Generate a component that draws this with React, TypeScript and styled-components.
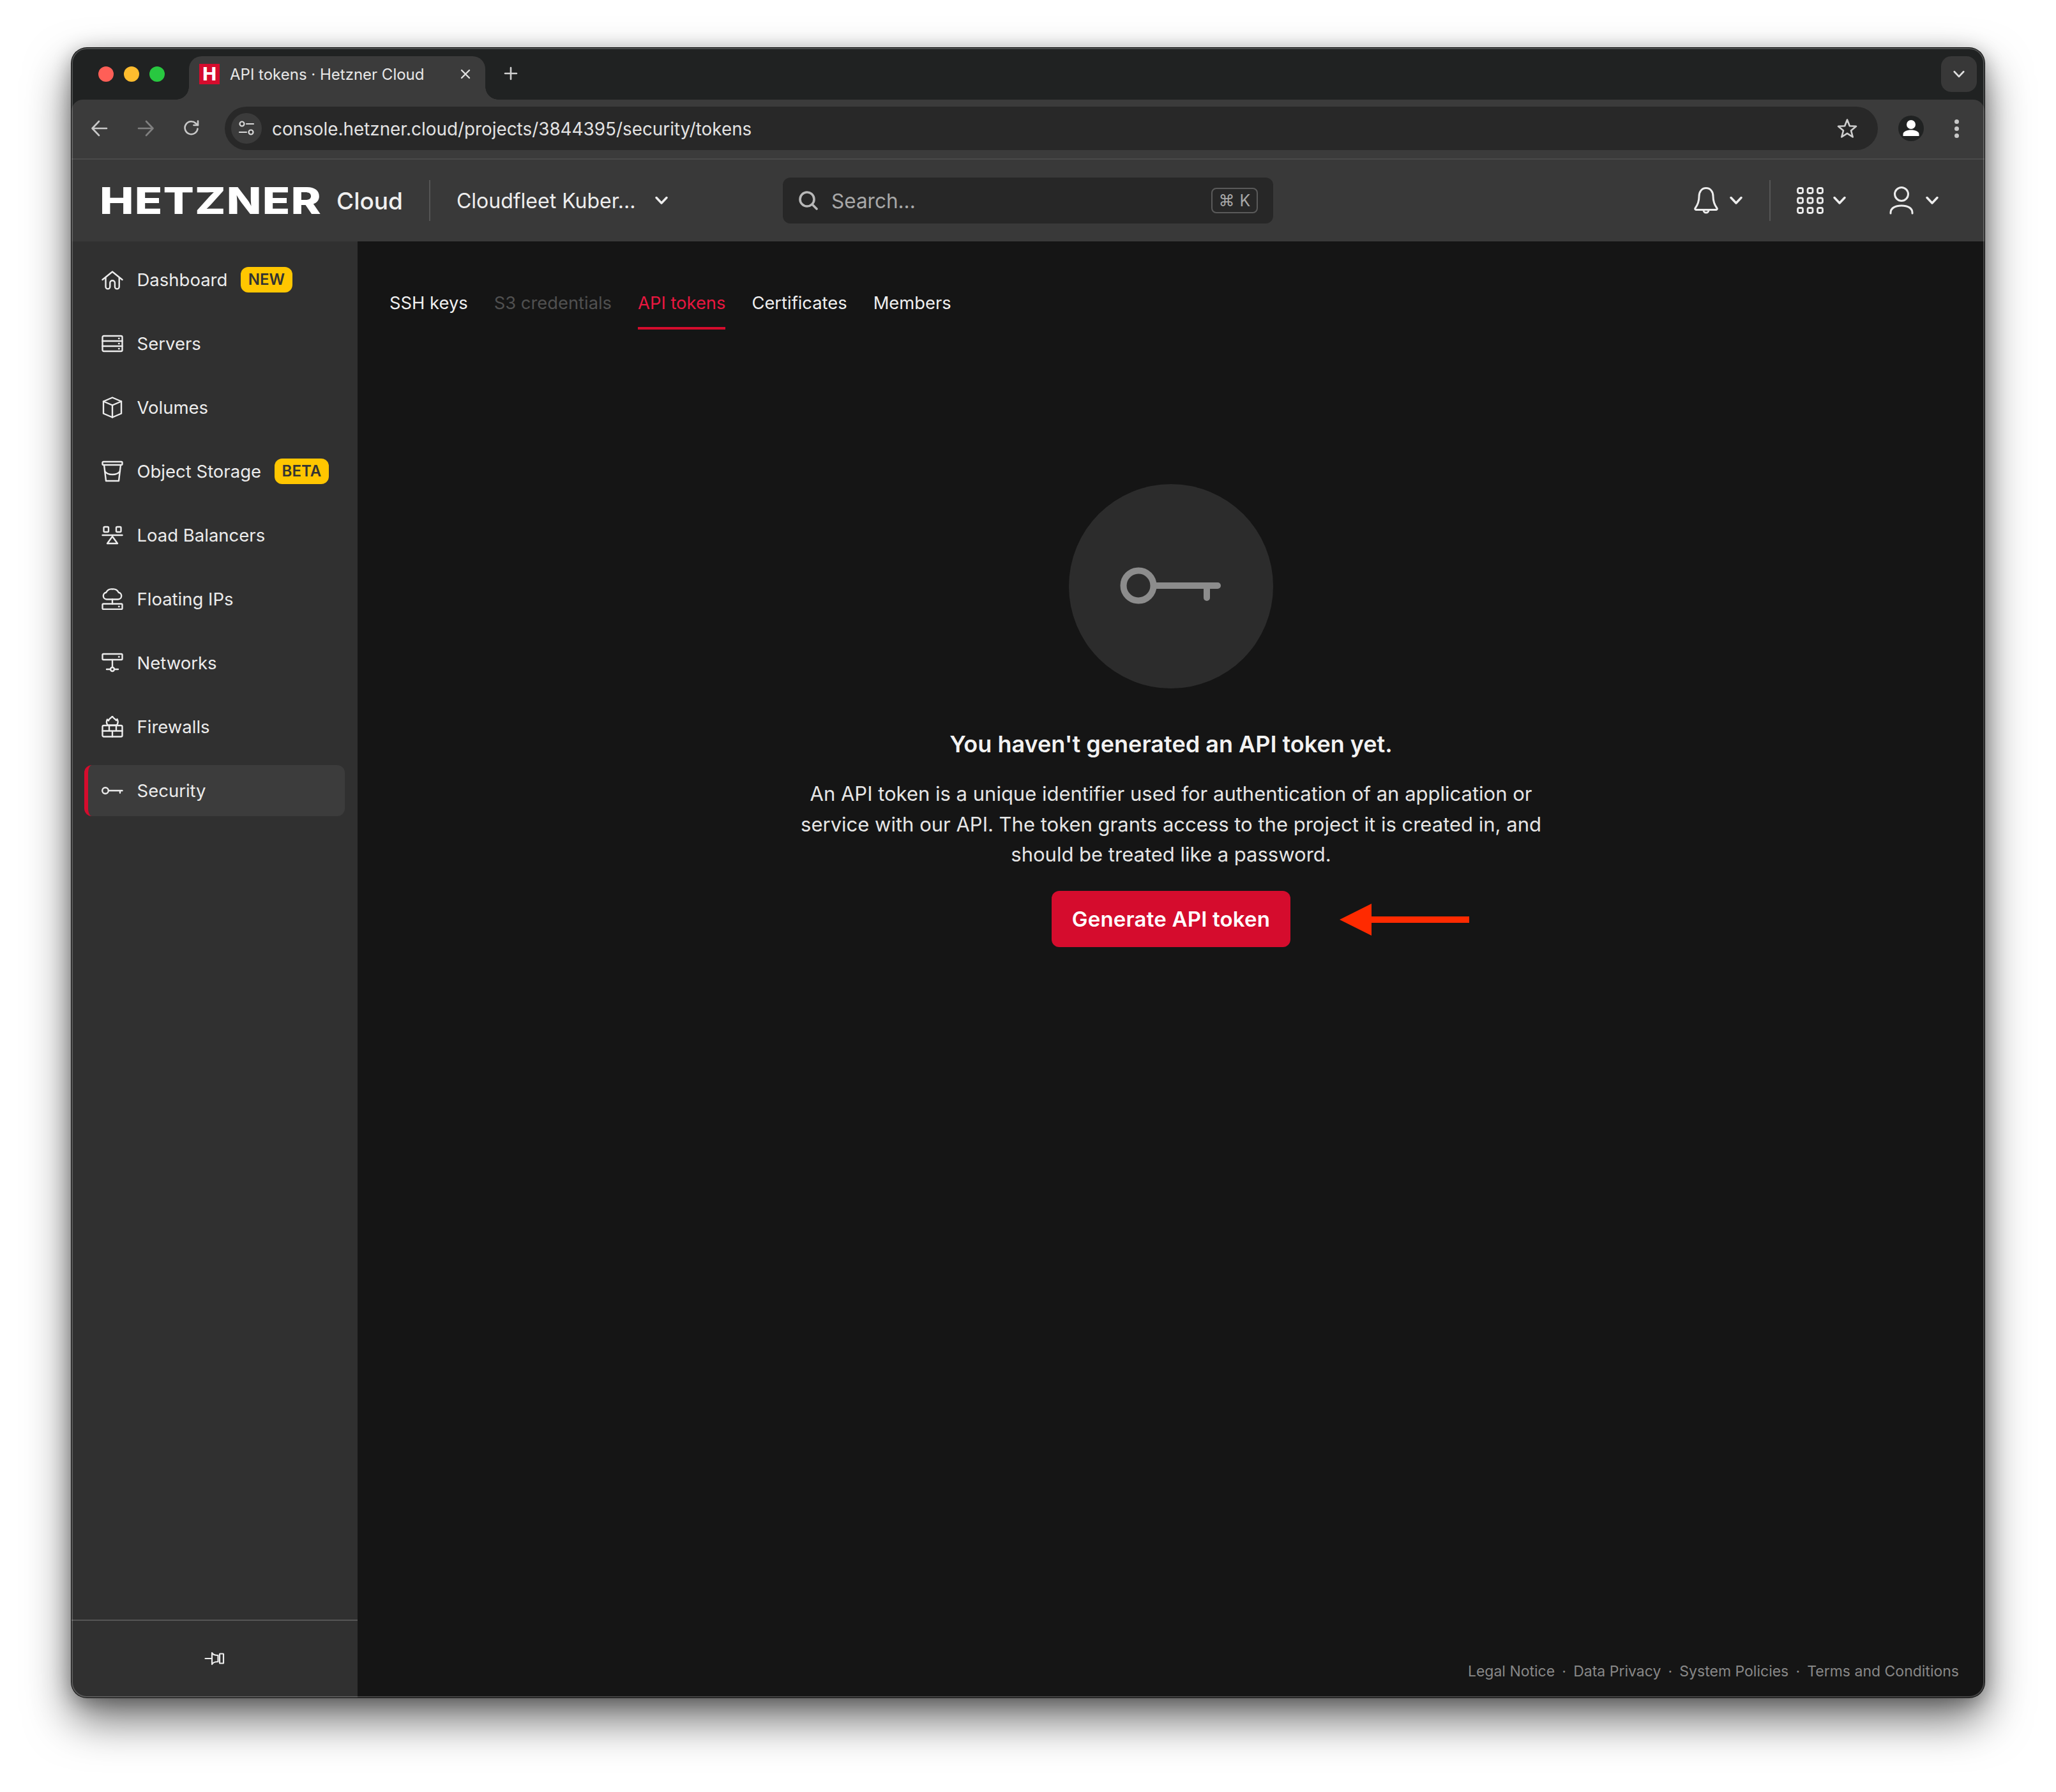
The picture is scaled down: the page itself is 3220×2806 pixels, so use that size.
import React from "react";
import styled, { createGlobalStyle } from "styled-components";

const Global = createGlobalStyle`
  html, body { margin: 0; padding: 0; background: #fff; }
  body { font-family: Inter, "Liberation Sans", sans-serif; }
  * { box-sizing: border-box; }
`;

const Page = styled.div`
  width: 3220px;
  height: 2806px;
  padding: 75px 112px 148px 112px;
  background: #fff;
  overflow: hidden;
`;

const Window = styled.div`
  position: relative;
  width: 2996px;
  height: 2583px;
  border-radius: 24px;
  background: #202222;
  display: flex;
  flex-direction: column;
  box-shadow: 0 0 0 1px #0c0c0c, 0 34px 70px rgba(0, 0, 0, 0.58), 0 6px 30px rgba(0, 0, 0, 0.3);
  &::after {
    content: "";
    position: absolute;
    inset: 0;
    border-radius: 24px;
    border: 2px solid rgba(255, 255, 255, 0.2);
    pointer-events: none;
  }
`;

const TabStrip = styled.div`
  height: 81px;
  flex: none;
  display: flex;
  align-items: flex-start;
  padding: 13px 12px 0 42px;
`;

const Lights = styled.div`
  display: flex;
  gap: 16px;
  padding-top: 16px;
  width: 142px;
`;

const Light = styled.span<{ $c: string }>`
  width: 24px;
  height: 24px;
  border-radius: 50%;
  background: ${(p) => p.$c};
`;

const Tab = styled.div`
  position: relative;
  width: 464px;
  height: 68px;
  background: #3b3b3b;
  border-radius: 20px 20px 0 0;
  display: flex;
  align-items: center;
  padding: 0 22px 12px 16px;
  color: #e8e8e8;
  font-size: 24px;
  &::before,
  &::after {
    content: "";
    position: absolute;
    bottom: 0;
    width: 20px;
    height: 20px;
  }
  &::before {
    left: -20px;
    background: radial-gradient(circle at 0 0, transparent 19.5px, #3b3b3b 20px);
  }
  &::after {
    right: -20px;
    background: radial-gradient(circle at 100% 0, transparent 19.5px, #3b3b3b 20px);
  }
`;

const Favicon = styled.span`
  width: 32px;
  height: 32px;
  flex: none;
  background: #d50c2d;
  color: #fff;
  font-size: 29px;
  font-weight: 800;
  line-height: 32px;
  text-align: center;
`;

const TabTitle = styled.span`
  margin-left: 16px;
  flex: 1;
  white-space: nowrap;
`;

const NewTab = styled.span`
  margin-left: 28px;
  margin-top: 15px;
  display: flex;
`;

const StripMenu = styled.div`
  margin-left: auto;
  width: 56px;
  height: 56px;
  border-radius: 16px;
  background: #383838;
  display: flex;
  align-items: center;
  justify-content: center;
`;

const Toolbar = styled.div`
  height: 94px;
  flex: none;
  background: #3b3b3b;
  border-radius: 18px 18px 0 0;
  border-bottom: 2px solid #4a4a4a;
  display: flex;
  align-items: center;
  padding: 0 40px 2px 30px;
`;

const NavButton = styled.span`
  width: 28px;
  height: 28px;
  margin-right: 44px;
  display: flex;
`;

const Omnibox = styled.div`
  margin-left: -6px;
  flex: 1;
  height: 68px;
  border-radius: 34px;
  background: #282828;
  display: flex;
  align-items: center;
  padding: 0 32px 0 10px;
`;

const TuneChip = styled.span`
  width: 48px;
  height: 48px;
  border-radius: 50%;
  background: #3b3b3b;
  display: flex;
  align-items: center;
  justify-content: center;
`;

const Url = styled.span`
  margin-left: 16px;
  padding-top: 2px;
  flex: 1;
  color: #e3e3e3;
  font-size: 27.85px;
  white-space: nowrap;
`;

const Avatar = styled.span`
  margin-left: 32px;
  width: 40px;
  height: 40px;
  border-radius: 50%;
  background: #202222;
  display: flex;
  align-items: center;
  justify-content: center;
`;

const DotsMenu = styled.span`
  margin-left: 48px;
  display: flex;
  flex-direction: column;
  gap: 4px;
`;

const Dot = styled.span`
  width: 7px;
  height: 7px;
  border-radius: 50%;
  background: #c8c8c8;
`;

const Header = styled.header`
  height: 128px;
  flex: none;
  background: #393939;
  display: grid;
  grid-template-columns: 1114px 768px 1fr;
  align-items: center;
`;

const Brand = styled.div`
  display: flex;
  align-items: center;
  padding-left: 48px;
  color: #fff;
`;

const LogoBox = styled.span`
  width: 343px;
  height: 44px;
  display: block;
  overflow: visible;
`;

const LogoText = styled.span`
  display: inline-block;
  margin-left: -4px;
  font-family: Inter, sans-serif;
  font-weight: 800;
  font-size: 58px;
  line-height: 44px;
  white-space: nowrap;
  transform-origin: 0 50%;
  transform: scaleX(1.232);
  letter-spacing: 1px;
`;

const CloudText = styled.span`
  margin-left: 24px;
  font-size: 37px;
  font-weight: 500;
  color: #f0f0f0;
`;

const VRule = styled.span<{ $h: number }>`
  width: 2px;
  height: ${(p) => p.$h}px;
  background: #555;
  flex: none;
`;

const BrandRule = styled(VRule)`
  margin-left: 41px;
`;

const ProjectName = styled.span`
  margin-left: 41px;
  font-size: 32px;
  color: #eee;
  white-space: nowrap;
`;

const ProjectCaret = styled.span`
  margin-left: 31px;
  display: flex;
`;

const Search = styled.div`
  height: 72px;
  border-radius: 12px;
  background: #272727;
  display: flex;
  align-items: center;
  padding: 0 24px;
  color: #a8a8a8;
`;

const SearchLabel = styled.span`
  margin-left: 20px;
  flex: 1;
  font-size: 31.5px;
`;

const Kbd = styled.span`
  width: 73px;
  height: 40px;
  border: 2px solid #5a5a5a;
  border-radius: 8px;
  display: flex;
  align-items: center;
  justify-content: center;
  gap: 8px;
  font-size: 25px;
  font-family: "DejaVu Sans", Inter, sans-serif;
`;

const KbdKey = styled.span`
  font-family: Inter, sans-serif;
`;

const HeaderActions = styled.div`
  display: flex;
  align-items: center;
  justify-content: flex-end;
  padding-right: 72px;
`;

const Action = styled.span<{ $gap: number; $ml: number }>`
  display: flex;
  align-items: center;
  gap: ${(p) => p.$gap}px;
  margin-left: ${(p) => p.$ml}px;
`;

const Body = styled.div`
  flex: 1;
  min-height: 0;
  display: flex;
  border-radius: 0 0 24px 24px;
  overflow: hidden;
`;

const Sidebar = styled.aside`
  width: 448px;
  flex: none;
  background: #303030;
  display: flex;
  flex-direction: column;
`;

const Nav = styled.nav`
  flex: 1;
  display: flex;
  flex-direction: column;
  gap: 20px;
  padding: 20px 20px 0;
`;

const NavRow = styled.div<{ $active?: boolean }>`
  height: 80px;
  display: flex;
  align-items: center;
  gap: 21.5px;
  padding-left: 21px;
  border-left: 6px solid ${(p) => (p.$active ? "#d50c2d" : "transparent")};
  border-radius: 12px;
  background: ${(p) => (p.$active ? "#3c3c3c" : "transparent")};
  color: #ececec;
  font-size: 27.5px;
  white-space: nowrap;
`;

const NavBadge = styled.span`
  margin-left: -1px;
  height: 40px;
  padding: 0 12px;
  border-radius: 12px;
  background: #ffc600;
  color: #333;
  font-size: 24px;
  font-weight: 600;
  line-height: 40px;
`;

const SidebarFoot = styled.div`
  height: 122px;
  flex: none;
  border-top: 2px solid #555;
  padding-bottom: 2px;
  display: flex;
  align-items: center;
  justify-content: center;
`;

const Main = styled.main`
  flex: 1;
  background: #151515;
  display: flex;
  flex-direction: column;
  padding-top: 80px;
`;

const Tabs = styled.div`
  display: flex;
  gap: 41px;
  padding-left: 50px;
`;

const PageTab = styled.div<{ $state?: "active" | "disabled" }>`
  height: 58px;
  font-size: 27.35px;
  line-height: 34px;
  white-space: nowrap;
  color: ${(p) => (p.$state === "active" ? "#e8173f" : p.$state === "disabled" ? "#505050" : "#f0f0f0")};
  border-bottom: 4px solid ${(p) => (p.$state === "active" ? "#d50c2d" : "transparent")};
`;

const Empty = styled.section`
  display: flex;
  flex-direction: column;
  align-items: center;
  margin-top: 242px;
`;

const KeyCircle = styled.div`
  width: 320px;
  height: 320px;
  border-radius: 50%;
  background: #2c2c2c;
  display: flex;
  align-items: center;
  justify-content: center;
`;

const Title = styled.h2`
  margin: 65px 0 0;
  font-size: 36px;
  line-height: 44px;
  font-weight: 600;
  color: #f2f2f2;
`;

const Text = styled.p`
  margin: 32px 0 0;
  width: 1165px;
  font-size: 31px;
  line-height: 47.5px;
  color: #e6e6e6;
  text-align: center;
`;

const ButtonRow = styled.div`
  position: relative;
  margin-top: 33px;
`;

const PrimaryButton = styled.button`
  width: 374px;
  height: 88px;
  border: 0;
  border-radius: 12px;
  background: #d50c2d;
  color: #fff;
  font-family: Inter, sans-serif;
  font-size: 33px;
  letter-spacing: 0.2px;
  font-weight: 600;
`;

const CalloutArrow = styled.svg`
  position: absolute;
  left: 451px;
  top: 20px;
`;

const Footer = styled.footer`
  margin-top: auto;
  height: 56px;
  padding-right: 40px;
  display: flex;
  justify-content: flex-end;
  align-items: flex-start;
  color: #888;
  font-size: 23px;
  line-height: 30px;
`;

const FooterSep = styled.span`
  width: 29px;
  text-align: center;
`;

const Chevron = ({ w = 20, color = "#eee", sw = 3.4 }: { w?: number; color?: string; sw?: number }) => (
  <svg width={w} height={w * 0.7} viewBox="0 0 20 14" fill="none" stroke={color} strokeWidth={sw} strokeLinecap="round" strokeLinejoin="round">
    <path d="M2 2.5 10 11 18 2.5" />
  </svg>
);

const Icon = ({ children }: { children: React.ReactNode }) => (
  <svg width="34" height="34" viewBox="0 0 34 34" fill="none" stroke="#ececec" strokeWidth="2.4" strokeLinecap="round" strokeLinejoin="round" style={{ flex: "none" }}>
    {children}
  </svg>
);

const HomeIcon = () => (
  <Icon>
    <path d="M1.5 17 17 4.5 32.5 17" />
    <path d="M6.5 14v14a3.4 3.4 0 0 0 6.8 0v-6a3.8 3.8 0 0 1 7.6 0v6a3.4 3.4 0 0 0 6.8 0V14" />
  </Icon>
);
const ServerIcon = () => (
  <Icon>
    <rect x="1.5" y="5" width="31" height="24" rx="2" />
    <path d="M1.5 13h31M1.5 21h31" />
    <path d="M27 9h.6M27 17h.6M27 25h.6" />
  </Icon>
);
const BoxIcon = () => (
  <Icon>
    <path d="M17 1.5 31 7.5v19L17 32.5 3 26.5v-19z" />
    <path d="M3 7.5 17 13.5 31 7.5M17 13.5v19" />
  </Icon>
);
const BucketIcon = () => (
  <Icon>
    <rect x="1.5" y="2" width="31" height="5" rx="1.5" />
    <path d="M4 7l3 25h20l3-25" />
    <path d="M5 17c3 4 8 5 12 5s9-1 12-5" />
  </Icon>
);
const BalancerIcon = () => (
  <Icon>
    <rect x="3.5" y="4" width="7.5" height="8" rx="1.5" />
    <rect x="23" y="4" width="7.5" height="8" rx="1.5" />
    <path d="M1.5 17h31" />
    <path d="M17 19 9 30h16z" />
  </Icon>
);
const FloatingIcon = () => (
  <Icon>
    <path d="M8 17.5a5.4 5.4 0 0 1-.8-10.700A9.500 9.500 0 0 1 17 1.500a9.500 9.500 0 0 1 9.800 5.300 5.400 5.400 0 0 1-.8 10.700z" />
    <path d="M17 17.500v7" />
    <rect x="1.500" y="24.500" width="31" height="8.500" rx="1.500" />
    <path d="M27 28.700h.6" />
  </Icon>
);
const NetworkIcon = () => (
  <Icon>
    <rect x="1.500" y="3" width="31" height="9" rx="1.500" />
    <path d="M27 7.500h.6" />
    <path d="M17 12v12" />
    <circle cx="17" cy="27" r="3" />
    <path d="M8 27h6M20 27h6" />
  </Icon>
);
const FirewallIcon = () => (
  <Icon>
    <path d="M17 0.500c1 3.500 5 4.500 6 6.500 1-0.500 1.500-1.500 1.500-2 1.500 3 1.500 7-1 9.500H10c-2.500-2.500-2.500-6-1-9 .5 1 1 1.500 2 2 0-3 4-4 6-7z" />
    <rect x="1.500" y="15" width="31" height="17.500" rx="2" />
    <path d="M1.500 23.500h31M12 15v8.500M23 15v8.500M17 23.500v9" />
  </Icon>
);
const KeySmallIcon = () => (
  <Icon>
    <circle cx="6" cy="17" r="4.800" />
    <path d="M11 17h21.500M29 17v3.500" />
  </Icon>
);

const items: { label: string; icon: React.ReactNode; badge?: string; active?: boolean }[] = [
  { label: "Dashboard", icon: <HomeIcon />, badge: "NEW" },
  { label: "Servers", icon: <ServerIcon /> },
  { label: "Volumes", icon: <BoxIcon /> },
  { label: "Object Storage", icon: <BucketIcon />, badge: "BETA" },
  { label: "Load Balancers", icon: <BalancerIcon /> },
  { label: "Floating IPs", icon: <FloatingIcon /> },
  { label: "Networks", icon: <NetworkIcon /> },
  { label: "Firewalls", icon: <FirewallIcon /> },
  { label: "Security", icon: <KeySmallIcon />, active: true },
];

export default function App() {
  return (
    <Page>
      <Global />
      <Window>
        <TabStrip>
          <Lights>
            <Light $c="#ff5f57" />
            <Light $c="#febc2e" />
            <Light $c="#28c840" />
          </Lights>
          <Tab>
            <Favicon>H</Favicon>
            <TabTitle>API tokens · Hetzner Cloud</TabTitle>
            <svg width="18" height="18" viewBox="0 0 18 18" stroke="#e0e0e0" strokeWidth="2.400" strokeLinecap="round">
              <path d="M3 3l12 12M15 3 3 15" />
            </svg>
          </Tab>
          <NewTab>
            <svg width="24" height="24" viewBox="0 0 24 24" stroke="#d0d0d0" strokeWidth="2.600" strokeLinecap="round">
              <path d="M12 3v18M3 12h18" />
            </svg>
          </NewTab>
          <StripMenu>
            <Chevron w={18} color="#e0e0e0" sw={3} />
          </StripMenu>
        </TabStrip>
        <Toolbar>
          <NavButton>
            <svg width="28" height="28" viewBox="0 0 28 28" fill="none" stroke="#c8c8c8" strokeWidth="2.600" strokeLinecap="round" strokeLinejoin="round">
              <path d="M25 14H3M13 3 2.500 14 13 25" />
            </svg>
          </NavButton>
          <NavButton>
            <svg width="28" height="28" viewBox="0 0 28 28" fill="none" stroke="#808080" strokeWidth="2.600" strokeLinecap="round" strokeLinejoin="round">
              <path d="M3 14h22M15 3l10.500 11L15 25" />
            </svg>
          </NavButton>
          <NavButton>
            <svg width="28" height="28" viewBox="0 0 28 28" fill="none" stroke="#c8c8c8" strokeWidth="2.600" strokeLinecap="round" strokeLinejoin="round">
              <path d="M23.500 14.500a10 10 0 1 1-3-8.500l3.500 3" />
              <path d="M24 2.500V9h-6.500" />
            </svg>
          </NavButton>
          <Omnibox>
            <TuneChip>
              <svg width="26" height="26" viewBox="0 0 26 26" fill="none" stroke="#d8d8d8" strokeWidth="2.200" strokeLinecap="round">
                <circle cx="6" cy="6" r="3.500" />
                <path d="M13 6h11M2 19h11" />
                <circle cx="20" cy="19" r="3.500" />
              </svg>
            </TuneChip>
            <Url>console.hetzner.cloud/projects/3844395/security/tokens</Url>
            <svg width="32" height="32" viewBox="0 0 32 32" fill="none" stroke="#cfcfcf" strokeWidth="2.600" strokeLinejoin="round">
              <path d="M16 2.500 19.800 12.200 30 12.800 22 19.400 24.700 29.500 16 23.800 7.300 29.500 10 19.400 2 12.800 12.200 12.200z" />
            </svg>
          </Omnibox>
          <Avatar>
            <svg width="28" height="30" viewBox="0 0 28 30" fill="#fff">
              <circle cx="14" cy="9" r="7" />
              <path d="M1.500 27v-3c0-4 6-6.500 12.500-6.500S26.500 20 26.500 24v3z" />
            </svg>
          </Avatar>
          <DotsMenu>
            <Dot />
            <Dot />
            <Dot />
          </DotsMenu>
        </Toolbar>
        <Header>
          <Brand>
            <LogoBox>
              <LogoText>HETZNER</LogoText>
            </LogoBox>
            <CloudText>Cloud</CloudText>
            <BrandRule $h={64} />
            <ProjectName>Cloudfleet Kuber...</ProjectName>
            <ProjectCaret>
              <Chevron w={20} />
            </ProjectCaret>
          </Brand>
          <Search>
            <svg width="32" height="32" viewBox="0 0 32 32" fill="none" stroke="#b8b8b8" strokeWidth="3.600" strokeLinecap="round">
              <circle cx="14" cy="14" r="11" />
              <path d="M22.500 22.500 29 29" />
            </svg>
            <SearchLabel>Search...</SearchLabel>
            <Kbd>
              ⌘<KbdKey>K</KbdKey>
            </Kbd>
          </Search>
          <HeaderActions>
            <Action $gap={16} $ml={0}>
              <svg width="42" height="44" viewBox="0 0 42 44" fill="none" stroke="#ececec" strokeWidth="3" strokeLinecap="round" strokeLinejoin="round">
                <path d="M21 2.500c-7 0-11 6-11 13 0 8-2 13-6 18.500a1.500 1.500 0 0 0 1 2.500h32a1.500 1.500 0 0 0 1-2.500c-4-5.500-6-10.500-6-18.500 0-7-4-13-11-13z" />
                <path d="M17 37a4 4 0 0 0 8 0" />
              </svg>
              <Chevron />
            </Action>
            <Action $gap={0} $ml={42}>
              <VRule $h={64} />
            </Action>
            <Action $gap={15} $ml={41}>
              <svg width="42" height="42" viewBox="0 0 42 42" fill="none" stroke="#ececec" strokeWidth="2.800">
                {[0, 15.500, 31].map((y) =>
                  [0, 15.500, 31].map((x) => <rect key={`${x}-${y}`} x={x + 1.500} y={y + 1.500} width="8" height="8" rx="2.400" />)
                )}
              </svg>
              <Chevron />
            </Action>
            <Action $gap={19} $ml={68}>
              <svg width="38" height="44" viewBox="0 0 38 44" fill="none" stroke="#ececec" strokeWidth="3" strokeLinecap="round">
                <ellipse cx="19" cy="12" rx="10.500" ry="10.500" />
                <path d="M2 42v-1c0-7 7-11 17-11s17 4 17 11v1" />
              </svg>
              <Chevron />
            </Action>
          </HeaderActions>
        </Header>
        <Body>
          <Sidebar>
            <Nav>
              {items.map((it) => (
                <NavRow key={it.label} $active={it.active}>
                  {it.icon}
                  {it.label}
                  {it.badge && <NavBadge>{it.badge}</NavBadge>}
                </NavRow>
              ))}
            </Nav>
            <SidebarFoot>
              <svg width="32" height="22" viewBox="0 0 32 22" fill="none" stroke="#ececec" strokeWidth="2.200" strokeLinecap="round" strokeLinejoin="round">
                <path d="M1.500 11H12" />
                <path d="M12 2c1.500 3 4 4 9.500 4v10C16 16 13.500 17 12 20z" />
                <rect x="24" y="3.500" width="6" height="15" rx="0.500" />
              </svg>
            </SidebarFoot>
          </Sidebar>
          <Main>
            <Tabs>
              <PageTab>SSH keys</PageTab>
              <PageTab $state="disabled">S3 credentials</PageTab>
              <PageTab $state="active">API tokens</PageTab>
              <PageTab>Certificates</PageTab>
              <PageTab>Members</PageTab>
            </Tabs>
            <Empty>
              <KeyCircle>
                <svg width="160" height="82" viewBox="0 0 160 82" fill="none" stroke="#8c8c8c" strokeWidth="10" strokeLinecap="round">
                  <circle cx="29" cy="40" r="23.500" />
                  <path d="M54 40h99M136 40v19" />
                </svg>
              </KeyCircle>
              <Title>You haven't generated an API token yet.</Title>
              <Text>
                An API token is a unique identifier used for authentication of an application or service with our API. The token grants access to the project it is created in, and should be treated like a password.
              </Text>
              <ButtonRow>
                <PrimaryButton>Generate API token</PrimaryButton>
                <CalloutArrow width="203" height="50" viewBox="0 0 203 50" fill="#ff2a00">
                  <path d="M0 25 50 0v20h153v10H50v20z" />
                </CalloutArrow>
              </ButtonRow>
            </Empty>
            <Footer>
              <span>Legal Notice</span>
              <FooterSep>·</FooterSep>
              <span>Data Privacy</span>
              <FooterSep>·</FooterSep>
              <span>System Policies</span>
              <FooterSep>·</FooterSep>
              <span>Terms and Conditions</span>
            </Footer>
          </Main>
        </Body>
      </Window>
    </Page>
  );
}
